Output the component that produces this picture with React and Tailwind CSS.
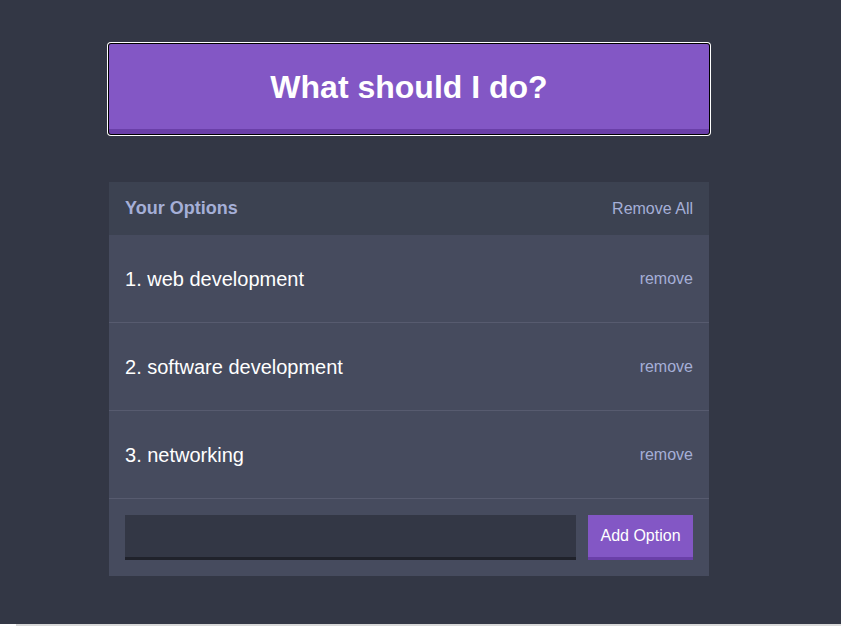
const options = ['web development', 'software development', 'networking'];

export default function App() {
  return (
    <div className="min-h-screen bg-[#333745] flex flex-col font-['Liberation_Sans',Arial,sans-serif]">
      <div className="flex-1">
        <div className="w-[600px] ml-[109px] pt-[44px]">
          <button className="w-full h-[90px] bg-[#8357c5] border-b-[5px] border-[#6a3fa8] rounded-[2px] shadow-[0_0_0_1px_#000,0_0_0_2px_#fff] text-white text-[32px] font-bold">
            What should I do?
          </button>

          <div className="mt-[48px] bg-[#464b5e]">
            <div className="h-[53px] bg-[#3c4251] flex items-center justify-between px-4">
              <h3 className="text-[18px] font-bold text-[#a5afd7]">Your Options</h3>
              <button className="text-[16px] text-[#a5afd7]">Remove All</button>
            </div>

            {options.map((opt, i) => (
              <div
                key={opt}
                className="h-[88px] flex items-center justify-between px-4 border-b border-[#575b6f]"
              >
                <p className="text-[20px] text-white">
                  {i + 1}. {opt}
                </p>
                <button className="text-[16px] text-[#a5afd7]">remove</button>
              </div>
            ))}

            <form className="flex items-center gap-3 px-4 py-4">
              <input
                type="text"
                className="flex-1 h-[45px] bg-[#333745] border-b-[3px] border-[#20222b] outline-none text-white px-2"
              />
              <button
                type="button"
                className="h-[45px] w-[105px] bg-[#8357c5] border-b-[3px] border-[#6a3fa8] text-white text-[16px]"
              >
                Add Option
              </button>
            </form>
          </div>
        </div>
      </div>
      <div className="h-[2px] bg-[#d9d9d9] flex">
        <div className="w-4 bg-white" />
      </div>
    </div>
  );
}
